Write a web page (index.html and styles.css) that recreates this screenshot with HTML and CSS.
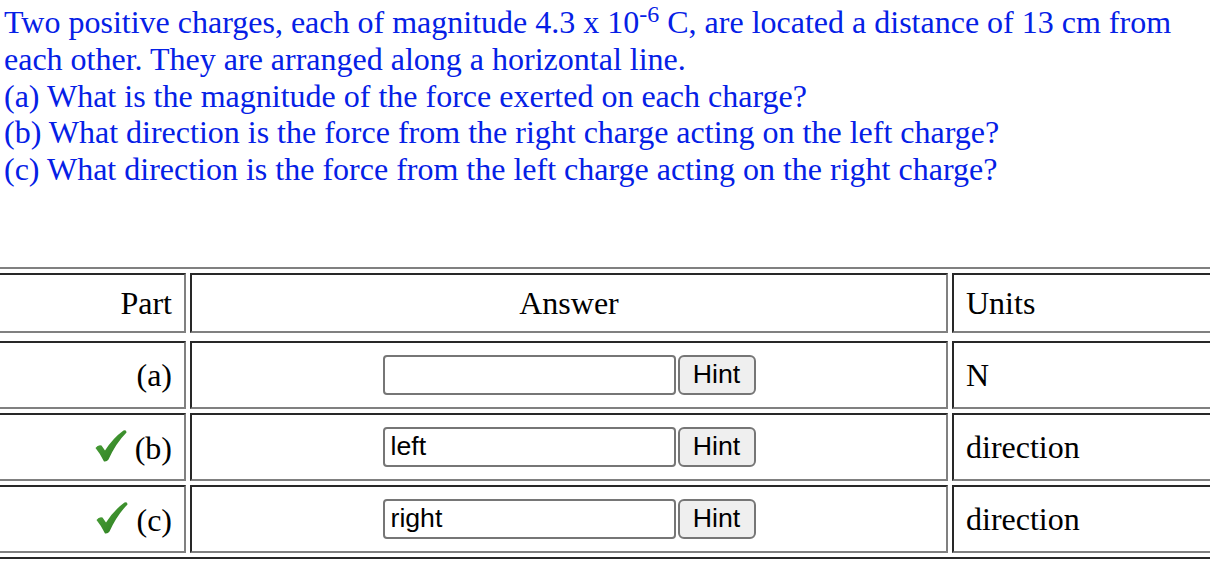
FILE: index.html
```html
<!DOCTYPE html>
<html>
<head>
<meta charset="utf-8">
<title>Charges</title>
<link rel="stylesheet" href="styles.css">
</head>
<body>
<div class="question">Two positive charges, each of magnitude 4.3 x 10<sup class="exp">-6</sup> C, are located a distance of 13 cm from<br>each other. They are arranged along a horizontal line.<br>(a) What is the magnitude of the force exerted on each charge?<br>(b) What direction is the force from the right charge acting on the left charge?<br>(c) What direction is the force from the left charge acting on the right charge?</div>
<div class="wrap">
<table class="answers">
<tr>
<th class="c-part">Part</th>
<th class="c-answer">Answer</th>
<th class="c-units">Units</th>
</tr>
<tr class="spacer"><td></td><td></td><td></td></tr>
<tr>
<td class="c-part">(a)</td>
<td class="c-answer"><div class="field"><input class="box" type="text" value=""><button class="hint" type="button">Hint</button></div></td>
<td class="c-units">N</td>
</tr>
<tr>
<td class="c-part"><svg class="check" viewBox="0 0 32 32" width="32" height="32"><defs><linearGradient id="g1" x1="0" y1="0" x2="1" y2="1"><stop offset="0" stop-color="#4fa53c"/><stop offset="1" stop-color="#2a7a1e"/></linearGradient></defs><path d="M0.5,18 Q3,14.5 6.5,15.5 L10,20.5 Q18,8 28.5,0.5 Q31.5,-0.5 31.5,2.5 Q21,13 13.5,29.5 Q12,32 9,31.5 Q5.5,24 0.5,18 Z" fill="url(#g1)"/></svg> (b)</td>
<td class="c-answer"><div class="field"><input class="box" type="text" value="left"><button class="hint" type="button">Hint</button></div></td>
<td class="c-units">direction</td>
</tr>
<tr>
<td class="c-part"><svg class="check" viewBox="0 0 32 32" width="32" height="32"><defs><linearGradient id="g2" x1="0" y1="0" x2="1" y2="1"><stop offset="0" stop-color="#4fa53c"/><stop offset="1" stop-color="#2a7a1e"/></linearGradient></defs><path d="M0.5,18 Q3,14.5 6.5,15.5 L10,20.5 Q18,8 28.5,0.5 Q31.5,-0.5 31.5,2.5 Q21,13 13.5,29.5 Q12,32 9,31.5 Q5.5,24 0.5,18 Z" fill="url(#g2)"/></svg> (c)</td>
<td class="c-answer"><div class="field"><input class="box" type="text" value="right"><button class="hint" type="button">Hint</button></div></td>
<td class="c-units">direction</td>
</tr>
</table>
</div>
</body>
</html>
```
FILE: styles.css
```css
html, body {
  margin: 0;
  padding: 0;
  background: #ffffff;
}
body {
  padding: 4px 4px 0 4px;
  font-family: "Liberation Serif", "Times New Roman", serif;
  font-size: 32px;
  color: #000;
  overflow: hidden;
}
.question {
  color: #0520e6;
  font-size: 32px;
  line-height: 36.8px;
  white-space: nowrap;
}
.exp {
  font-size: 24px;
  line-height: 0;
  vertical-align: 11px;
}
.wrap {
  margin: 79px -4px 0 -4px;
  overflow: hidden;
  width: 1210px;
}
.answers {
  margin-left: -20px;
  width: 1250px;
  table-layout: fixed;
  border-collapse: separate;
  border-spacing: 4px;
  border-style: solid;
  border-width: 2px;
  border-color: #808080 #282828 #282828 #808080;
}
.answers th,
.answers td {
  box-sizing: border-box;
  border-style: solid;
  border-width: 2px;
  border-color: #282828 #808080 #808080 #282828;
  padding: 12px;
  font-weight: normal;
  font-size: 32px;
  line-height: 32px;
  vertical-align: middle;
}
.answers .spacer td {
  border: 0;
  padding: 0;
  height: 0;
  line-height: 0;
}
.c-part {
  width: 200px;
  text-align: right;
}
.c-answer {
  width: 758px;
  text-align: center;
}
.c-units {
  width: 272px;
  text-align: left;
}
.field {
  display: flex;
  justify-content: center;
  gap: 2px;
}
.box {
  box-sizing: border-box;
  width: 293px;
  height: 40px;
  margin: 0;
  padding: 2px 6px;
  border: 2px solid #767676;
  border-radius: 4px;
  font-family: "Liberation Sans", Arial, sans-serif;
  font-size: 26.67px;
  color: #000;
  background: #fff;
}
.hint {
  box-sizing: border-box;
  width: 78px;
  height: 40px;
  margin: 0;
  padding: 2px 10px;
  border: 2px solid #767676;
  border-radius: 6px;
  background: #efefef;
  font-family: "Liberation Sans", Arial, sans-serif;
  font-size: 26.67px;
  color: #000;
}
.check {
  vertical-align: -3px;
}
```
